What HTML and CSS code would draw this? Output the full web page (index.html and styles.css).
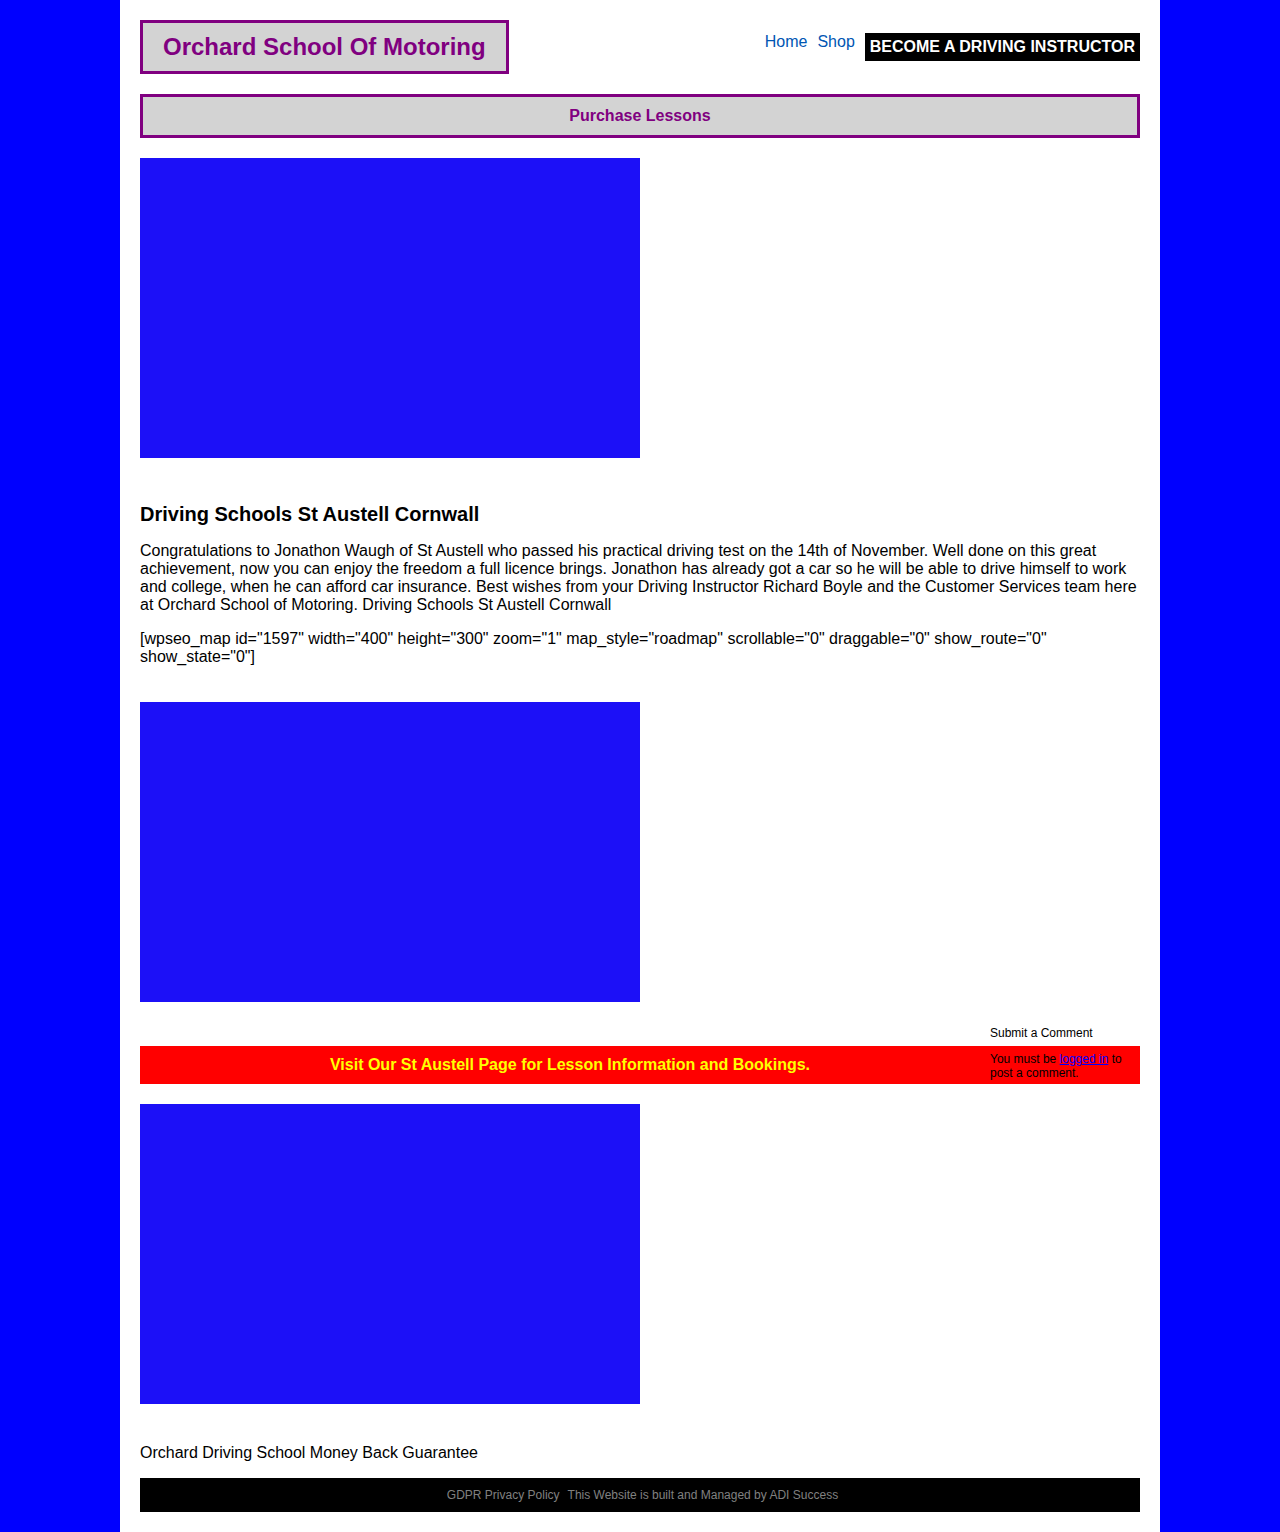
FILE: index.html
```html
<!DOCTYPE html>
<html lang="en">
<head>
<meta charset="utf-8">
<title>Driving Schools St Austell Cornwall</title>
<link rel="stylesheet" href="styles.css">
</head>
<body>
<div class="page">
  <header class="header">
    <h1 class="brand">Orchard School Of Motoring</h1>
    <nav class="nav">
      <a href="#">Home</a>
      <a href="#">Shop</a>
      <a class="nav-cta" href="#">BECOME A DRIVING INSTRUCTOR</a>
    </nav>
  </header>
  <a class="purchase" href="#">Purchase Lessons</a>
  <main>
    <div class="media"></div>
    <article class="article">
      <h2>Driving Schools St Austell Cornwall</h2>
      <p>Congratulations to Jonathon Waugh of St Austell who passed his practical driving test on the 14th of November. Well done on this great achievement, now you can enjoy the freedom a full licence brings. Jonathon has already got a car so he will be able to drive himself to work and college, when he can afford car insurance. Best wishes from your Driving Instructor Richard Boyle and the Customer Services team here at Orchard School of Motoring. Driving Schools St Austell Cornwall</p>
      <p>[wpseo_map id="1597" width="400" height="300" zoom="1" map_style="roadmap" scrollable="0" draggable="0" show_route="0" show_state="0"]</p>
    </article>
    <div class="media"></div>
    <div class="banner">
      <a class="banner-link" href="#">Visit Our St Austell Page for Lesson Information and Bookings.</a>
      <section class="comment">
        <h3>Submit a Comment</h3>
        <p>You must be <a href="#">logged in</a> to post a comment.</p>
      </section>
    </div>
    <div class="media"></div>
    <p class="guarantee">Orchard Driving School Money Back Guarantee</p>
  </main>
  <footer class="footer">
    <a href="#">GDPR Privacy Policy</a>
    <a href="#">This Website is built and Managed by ADI Success</a>
  </footer>
</div>
</body>
</html>
```
FILE: styles.css
```css
* {
  box-sizing: border-box;
}

body {
  margin: 0;
  background: #0000ff;
  color: #000;
  font: 16px/18px "Liberation Sans", Arial, sans-serif;
}

h1, h2, h3, p {
  margin: 0;
}

.page {
  max-width: 1040px;
  margin: 0 auto;
  padding: 20px;
  background: #fff;
}

.header {
  display: flex;
  flex-wrap: wrap;
  align-items: center;
  justify-content: space-between;
  gap: 10px;
}

.brand {
  padding: 10px 20px;
  border: 3px solid #800080;
  background: #d3d3d3;
  color: #800080;
  font-size: 24px;
  line-height: 28px;
}

.nav {
  display: flex;
  gap: 10px;
}

.nav a {
  color: #0056b3;
  text-decoration: none;
}

.nav .nav-cta {
  padding: 5px;
  background: #000;
  color: #fff;
  font-weight: bold;
}

.purchase {
  display: block;
  margin: 20px 0;
  padding: 10px;
  border: 3px solid #800080;
  background: #d3d3d3;
  color: #800080;
  font-weight: bold;
  text-align: center;
  text-decoration: none;
}

.media {
  max-width: 500px;
  height: 300px;
  background: #1c10f7;
}

.article {
  padding: 44px 0 36px;
}

.article h2 {
  font-size: 20px;
  line-height: 24px;
}

.article p {
  margin-top: 16px;
}

.banner {
  position: relative;
  margin: 44px 0 20px;
  padding: 10px 150px 10px 10px;
  background: #ff0000;
  text-align: center;
}

.banner-link {
  color: #ffff00;
  font-weight: bold;
  text-decoration: none;
}

/* The comment note overlaps the right end of the banner. */
.comment {
  position: absolute;
  right: 0;
  bottom: 4px;
  width: 150px;
  font-size: 12px;
  line-height: 14px;
  text-align: left;
}

.comment h3 {
  margin-bottom: 12px;
  font-size: 12px;
  font-weight: normal;
}

.comment a {
  color: #0000ff;
}

.guarantee {
  margin: 40px 0 16px;
}

.footer {
  display: flex;
  flex-wrap: wrap;
  justify-content: center;
  gap: 3px;
  padding: 10px;
  background: #000;
  font-size: 12px;
  line-height: 14px;
}

.footer a {
  margin-left: 5px;
  color: #808080;
  text-decoration: none;
}
```
